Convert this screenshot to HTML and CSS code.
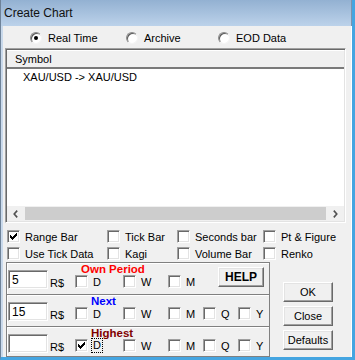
FILE: index.html
```html
<!DOCTYPE html>
<html lang="en">
<head>
	<meta charset="utf-8">
	<title>Create Chart</title>
	<link rel="stylesheet" href="styles.css">
</head>
<body>
	<div class="window">
		<div class="titlebar">Create Chart</div>
		<div class="client">
			<div class="radios">
				<label class="radio radio-wide"><span class="radio-dot checked"></span>Real Time</label>
				<label class="radio radio-mid"><span class="radio-dot"></span>Archive</label>
				<label class="radio"><span class="radio-dot"></span>EOD Data</label>
			</div>

			<div class="listbox">
				<div class="lb-header"><span class="lb-col">Symbol</span></div>
				<div class="lb-body">
					<div class="lb-item">XAU/USD -&gt; XAU/USD</div>
				</div>
				<div class="hscroll">
					<span class="sb-arrow">
						<svg width="5" height="8" viewBox="0 0 5 8"><path d="M4.2 0.6 L1.2 4 L4.2 7.4" fill="none" stroke="#505050" stroke-width="1.6"></path></svg>
					</span>
					<span class="sb-thumb"></span>
					<span class="sb-arrow">
						<svg width="5" height="8" viewBox="0 0 5 8"><path d="M0.8 0.6 L3.8 4 L0.8 7.4" fill="none" stroke="#505050" stroke-width="1.6"></path></svg>
					</span>
				</div>
			</div>

			<div class="types">
				<label class="check"><span class="cb"><svg class="tick" width="7" height="7" viewBox="0 0 7 7"><path d="M0 2h1v3H0zM1 3h1v3H1zM2 4h1v3H2zM3 3h1v3H3zM4 2h1v3H4zM5 1h1v3H5zM6 0h1v3H6z"></path></svg></span>Range Bar</label>
				<label class="check"><span class="cb"></span>Tick Bar</label>
				<label class="check"><span class="cb"></span>Seconds bar</label>
				<label class="check"><span class="cb"></span>Pt &amp; Figure</label>
				<label class="check"><span class="cb"></span>Use Tick Data</label>
				<label class="check"><span class="cb"></span>Kagi</label>
				<label class="check"><span class="cb"></span>Volume Bar</label>
				<label class="check"><span class="cb"></span>Renko</label>
			</div>

			<div class="bottom">
				<div class="groups">
					<div class="group">
						<span class="field">5</span>
						<span class="unit">R$</span>
						<div class="periods">
							<div class="period-title own">Own Period</div>
							<div class="period-row">
								<label class="check p-d"><span class="cb"></span>D</label>
								<label class="check p-w"><span class="cb"></span>W</label>
								<label class="check p-m-short"><span class="cb"></span>M</label>
							</div>
						</div>
						<button type="button" class="btn btn-help">HELP</button>
					</div>
					<div class="group">
						<span class="field">15</span>
						<span class="unit">R$</span>
						<div class="periods">
							<div class="period-title next">Next</div>
							<div class="period-row">
								<label class="check p-d"><span class="cb"></span>D</label>
								<label class="check p-w"><span class="cb"></span>W</label>
								<label class="check p-m"><span class="cb"></span>M</label>
								<label class="check p-q"><span class="cb"></span>Q</label>
								<label class="check"><span class="cb"></span>Y</label>
							</div>
						</div>
					</div>
					<div class="group group-last">
						<span class="field"></span>
						<span class="unit">R$</span>
						<div class="periods">
							<div class="period-title highest">Highest</div>
							<div class="period-row">
								<label class="check p-d"><span class="cb"><svg class="tick" width="7" height="7" viewBox="0 0 7 7"><path d="M0 2h1v3H0zM1 3h1v3H1zM2 4h1v3H2zM3 3h1v3H3zM4 2h1v3H4zM5 1h1v3H5zM6 0h1v3H6z"></path></svg></span><span class="focus">D</span></label>
								<label class="check p-w"><span class="cb"></span>W</label>
								<label class="check p-m"><span class="cb"></span>M</label>
								<label class="check p-q"><span class="cb"></span>Q</label>
								<label class="check"><span class="cb"></span>Y</label>
							</div>
						</div>
					</div>
				</div>
				<div class="buttons">
					<button type="button" class="btn">OK</button>
					<button type="button" class="btn">Close</button>
					<button type="button" class="btn">Defaults</button>
				</div>
			</div>
		</div>
	</div>
</body>
</html>
```

FILE: styles.css
```css
html, body {
	margin: 0;
	padding: 0;
	background: #f0f0f0;
}
body {
	font-family: "Liberation Sans", Arial, sans-serif;
	font-size: 11px;
	color: #000;
}
.window {
	width: 355px;
	height: 360px;
	box-sizing: border-box;
	border-left: 1px solid #6f8399;
	border-right: 3px solid #45a5e1;
	border-bottom: 3px solid #45a5e1;
	display: flex;
	flex-direction: column;
	overflow: hidden;
}
.titlebar {
	height: 26px;
	flex: none;
	line-height: 27px;
	padding-left: 3px;
	font-size: 12px;
	color: #111;
	background: linear-gradient(#93b1d2, #bcd2ea);
	border-right: 1px solid #7d93ad;
}
.client {
	flex: 1;
	border-left: 2px solid #c9d9eb;
	border-right: 1px solid #fff;
	background: #f0f0f0;
	display: flex;
	flex-direction: column;
}

/* radio row */
.radios {
	height: 22px;
	padding-left: 27px;
	display: flex;
	align-items: center;
}
.radio {
	display: flex;
	align-items: center;
	gap: 6px;
	padding-top: 1px;
}
.radio-wide {
	width: 96px;
}
.radio-mid {
	width: 92px;
}
.radio-dot {
	width: 12px;
	height: 12px;
	box-sizing: border-box;
	border-radius: 50%;
	border: 1px solid;
	border-color: #8a8a8a #f4f4f4 #f4f4f4 #8a8a8a;
	box-shadow: inset 1px 1px 0 #5a5a5a;
	background: #fff;
	display: flex;
	align-items: center;
	justify-content: center;
}
.radio-dot.checked::after {
	content: '';
	width: 4px;
	height: 4px;
	border-radius: 50%;
	background: #000;
}

/* list */
.listbox {
	margin-left: 2px;
	width: 341px;
	height: 175px;
	box-sizing: border-box;
	border: 1px solid;
	border-color: #a0a0a0 #fff #fff #a0a0a0;
	display: flex;
	flex-direction: column;
}
.lb-inner, .listbox {
	box-shadow: inset 1px 1px 0 #696969, inset -1px -1px 0 #e3e3e3;
	padding: 1px;
}
.lb-header {
	height: 16px;
	background: #f0f0f0;
	border-top: 1px solid #fff;
	border-bottom: 2px solid #7a7a7a;
	display: flex;
}
.lb-col {
	padding-left: 8px;
	line-height: 16px;
	flex: 1;
}
.lb-body {
	flex: 1;
	background: #fff;
}
.lb-item {
	padding-left: 16px;
	line-height: 14px;
	padding-top: 1px;
}
.hscroll {
	height: 15px;
	background: #f0f0f0;
	display: flex;
	align-items: center;
}
.sb-arrow {
	width: 17px;
	height: 15px;
	display: flex;
	align-items: center;
	justify-content: center;
}
.sb-thumb {
	flex: 1;
	height: 13px;
	margin: 0 1px;
	background: #cdcdcd;
}

/* chart type checks */
.types {
	margin-top: 5px;
	padding-left: 4px;
	display: grid;
	grid-template-columns: 100px 70px 86px auto;
	grid-auto-rows: 17px;
	align-items: center;
}
.check {
	display: flex;
	align-items: center;
	gap: 5px;
	white-space: nowrap;
}
.cb {
	width: 13px;
	height: 13px;
	flex: none;
	box-sizing: border-box;
	border: 1px solid;
	border-color: #a0a0a0 #fff #fff #a0a0a0;
	box-shadow: inset 1px 1px 0 #696969, inset -1px -1px 0 #e3e3e3;
	background: #fff;
	display: flex;
	align-items: center;
	justify-content: center;
}
.tick {
	display: block;
	fill: #000;
}

/* period groups */
.bottom {
	flex: 1;
	display: flex;
}
.groups {
	margin-left: 3px;
	width: 264px;
	display: flex;
	flex-direction: column;
}
.group {
	height: 32px;
	box-sizing: border-box;
	border: 1px solid #808080;
	border-bottom: 0;
	box-shadow: inset 1px 1px 0 #fff;
	padding-left: 1px;
	display: flex;
	align-items: flex-start;
}
.group-last {
	flex: 1;
	border-bottom: 1px solid #808080;
}
.field {
	width: 40px;
	height: 19px;
	margin-top: 7px;
	box-sizing: border-box;
	border: 1px solid;
	border-color: #a0a0a0 #fff #fff #a0a0a0;
	box-shadow: inset 1px 1px 0 #696969, inset -1px -1px 0 #e3e3e3;
	background: #fff;
	padding: 2px 0 0 3px;
	font-size: 12px;
	line-height: 14px;
	flex: none;
}
.unit {
	width: 27px;
	padding-left: 2px;
	margin-top: 14px;
	line-height: 13px;
	box-sizing: border-box;
	flex: none;
}
.periods {
	display: flex;
	flex-direction: column;
	padding-top: 1px;
}
.period-title {
	height: 10px;
	line-height: 10px;
	font-size: 11.5px;
	font-weight: bold;
	padding-left: 16px;
}
.own {
	color: #ff0000;
	padding-left: 6px;
}
.next {
	color: #0000ff;
}
.highest {
	color: #800000;
}
.period-row {
	display: flex;
	height: 13px;
	margin-top: 1px;
}
.p-d {
	width: 48px;
}
.p-w {
	width: 45px;
}
.p-m {
	width: 35px;
}
.p-m-short {
	width: 50px;
}
.p-q {
	width: 35px;
}
.focus {
	outline: 1px dotted #000;
	outline-offset: 1px;
	line-height: 11px;
}

/* buttons */
.btn {
	font-family: "Liberation Sans", Arial, sans-serif;
	font-size: 11px;
	color: #000;
	background: #f0f0f0;
	-webkit-appearance: none;
	appearance: none;
	margin: 0;
	padding: 0;
	height: 20px;
	box-sizing: border-box;
	border: 1px solid;
	border-color: #fff #696969 #696969 #fff;
	box-shadow: inset -1px -1px 0 #a0a0a0, inset 1px 1px 0 #e3e3e3;
}
.btn-help {
	width: 46px;
	margin: 4px 0 0 0;
	font-size: 12px;
	font-weight: bold;
}
.buttons {
	margin-left: 13px;
	margin-top: 20px;
	width: 50px;
	display: flex;
	flex-direction: column;
	gap: 4px;
}
```
